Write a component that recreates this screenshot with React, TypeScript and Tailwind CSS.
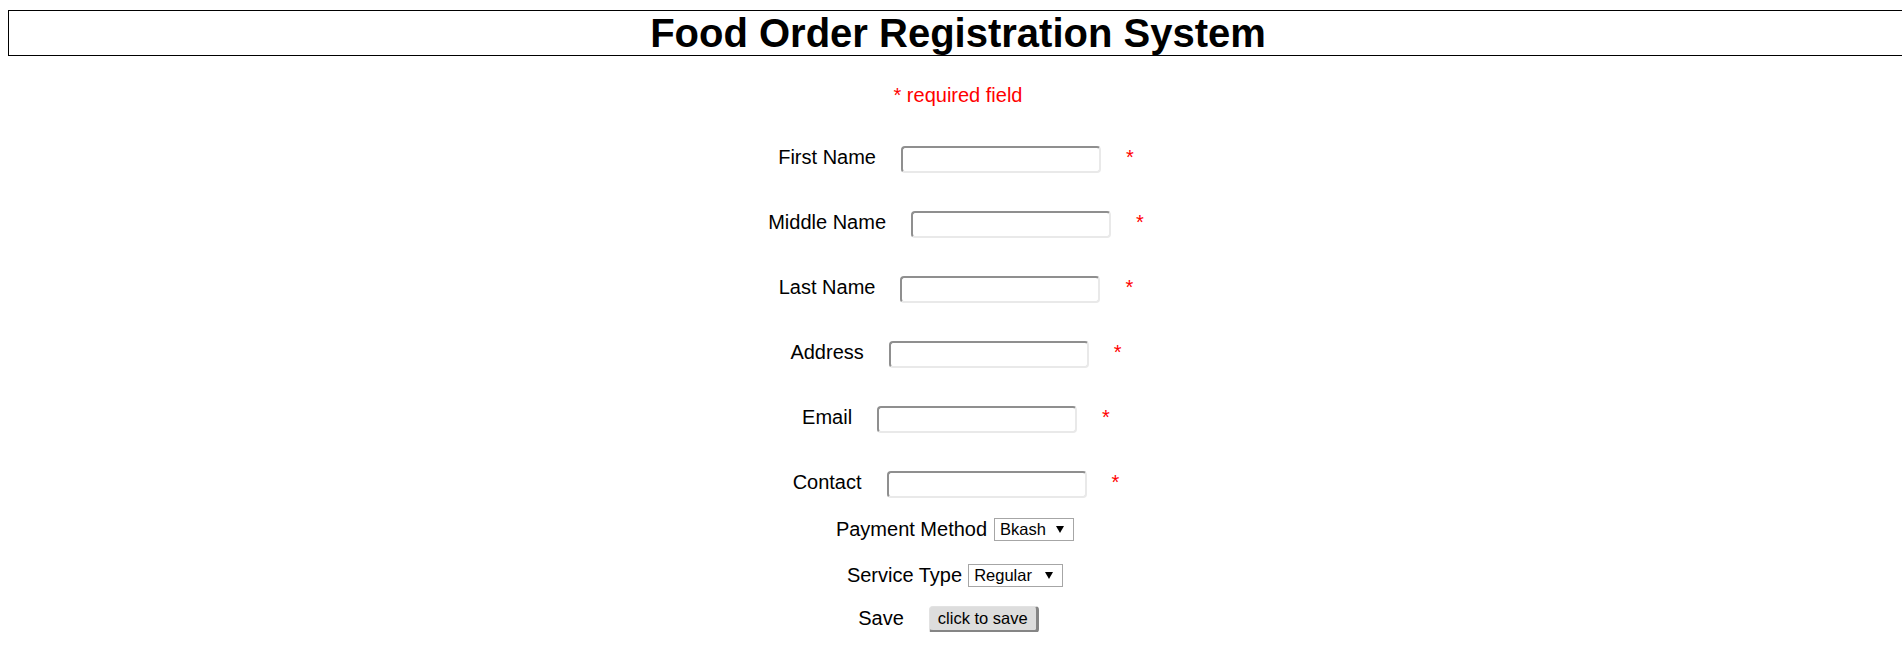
import React from "react";

const font = { fontFamily: '"Liberation Sans", Arial, sans-serif' };

function TextRow({ label }: { label: string }) {
  return (
    <div className="flex h-[65px] items-center justify-center pr-[4px]">
      <span className="text-[20px] leading-[23px] text-black">{label}</span>
      <input
        type="text"
        className="ml-[25px] mt-[3px] box-border h-[27px] w-[200px] rounded-[4px] border-2 border-t-[#8f8f8f] border-l-[#8f8f8f] border-b-[#e9e9e9] border-r-[#e9e9e9] bg-white outline-none"
      />
      <span className="ml-[25px] text-[20px] leading-[23px] text-[#ff0000]">*</span>
    </div>
  );
}

function FakeSelect({ value, width }: { value: string; width: string }) {
  return (
    <div
      className={`${width} box-border flex h-[23px] items-center justify-between border border-[#a6a6a6] bg-white pl-[5px] pr-[9px] text-[16.5px] leading-[20px] text-black`}
    >
      <span>{value}</span>
      <svg width="8" height="7" viewBox="0 0 8 7">
        <polygon points="0,0 8,0 4,7" fill="#000" />
      </svg>
    </div>
  );
}

export default function App() {
  return (
    <div className="w-full overflow-hidden bg-white" style={font}>
      <div className="ml-[8px] w-[1900px]">
        <h1 className="mt-[10px] box-border h-[46px] border border-black text-center text-[40px] font-bold leading-[44px] text-black">
          Food Order Registration System
        </h1>
        <div className="mt-[28px] h-[23px] text-center text-[20px] leading-[23px] text-[#ff0000]">
          * required field
        </div>
        <div className="mt-[18px] flex flex-col">
          <TextRow label="First Name" />
          <TextRow label="Middle Name" />
          <TextRow label="Last Name" />
          <TextRow label="Address" />
          <TextRow label="Email" />
          <TextRow label="Contact" />
        </div>
        <div className="flex h-[28px] items-center justify-center pr-[6px]">
          <span className="text-[20px] leading-[23px] text-black">Payment Method</span>
          <div className="ml-[7px]">
            <FakeSelect value="Bkash" width="w-[80px]" />
          </div>
        </div>
        <div className="mt-[18px] flex h-[28px] items-center justify-center pr-[6px]">
          <span className="text-[20px] leading-[23px] text-black">Service Type</span>
          <div className="ml-[6px]">
            <FakeSelect value="Regular" width="w-[95px]" />
          </div>
        </div>
        <div className="mt-[15px] flex h-[28px] items-center justify-center pr-[19px]">
          <span className="text-[20px] leading-[23px] text-black">Save</span>
          <button
            type="button"
            className="ml-[25px] mt-[2px] box-border h-[27px] w-[110px] rounded-[4px] border-t border-l border-b-[3px] border-r-[3px] border-t-[#e2e2e2] border-l-[#e2e2e2] border-b-[#858585] border-r-[#858585] bg-[#dddddd] text-[16.5px] leading-[20px] text-black"
          >
            click to save
          </button>
        </div>
      </div>
    </div>
  );
}
